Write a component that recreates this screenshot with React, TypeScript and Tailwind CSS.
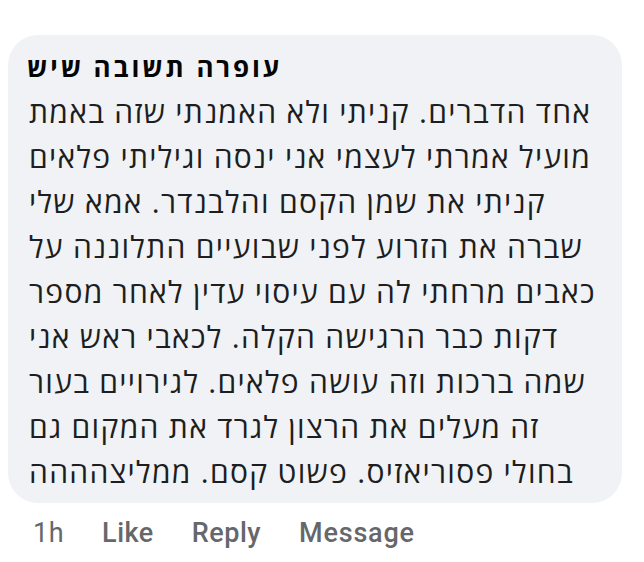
import React from "react";

const lines = [
  "אחד הדברים. קניתי ולא האמנתי שזה באמת",
  "מועיל אמרתי לעצמי אני ינסה וגיליתי פלאים",
  "קניתי את שמן הקסם והלבנדר. אמא שלי",
  "שברה את הזרוע לפני שבועיים התלוננה על",
  "כאבים מרחתי לה עם עיסוי עדין לאחר מספר",
  "דקות כבר הרגישה הקלה. לכאבי ראש אני",
  "שמה ברכות וזה עושה פלאים. לגירויים בעור",
  "זה מעלים את הרצון לגרד את המקום גם",
  "בחולי פסוריאזיס. פשוט קסם. ממליצהההה",
];

const font = { fontFamily: '"Open Sans", "Noto Sans", Roboto, sans-serif' };

export default function App() {
  return (
    <div className="h-[562px] w-[644px] overflow-hidden bg-white pl-[8px] pt-[35px]" dir="ltr">
      <div
        className="h-[468px] w-[614px] rounded-[30px] bg-[#f0f2f5] pl-[21px] pt-[14px] text-[#1c1e21]"
        style={font}
      >
        <div className="-ml-[2px] text-[26px] font-bold leading-[36px] tracking-[2.9px] text-[#050505]">
          עופרה תשובה שיש
        </div>
        <div className="mt-[4px] text-left text-[30px] leading-[45px] tracking-[1.3px]">
          {lines.map((line, i) => (
            <div key={i} className="whitespace-nowrap">
              {line}
            </div>
          ))}
        </div>
      </div>
      <div
        className="mt-[10px] flex items-center pl-[25px] text-[27px] leading-[40px] text-[#65676b]"
        style={{ fontFamily: 'Roboto, "Liberation Sans", sans-serif' }}
      >
        <span className="tracking-[0.5px]">1h</span>
        <span className="ml-[38px] font-medium tracking-[0.5px]">Like</span>
        <span className="ml-[38px] font-medium tracking-[0.5px]">Reply</span>
        <span className="ml-[38px] font-medium tracking-[0.8px]">Message</span>
      </div>
    </div>
  );
}
